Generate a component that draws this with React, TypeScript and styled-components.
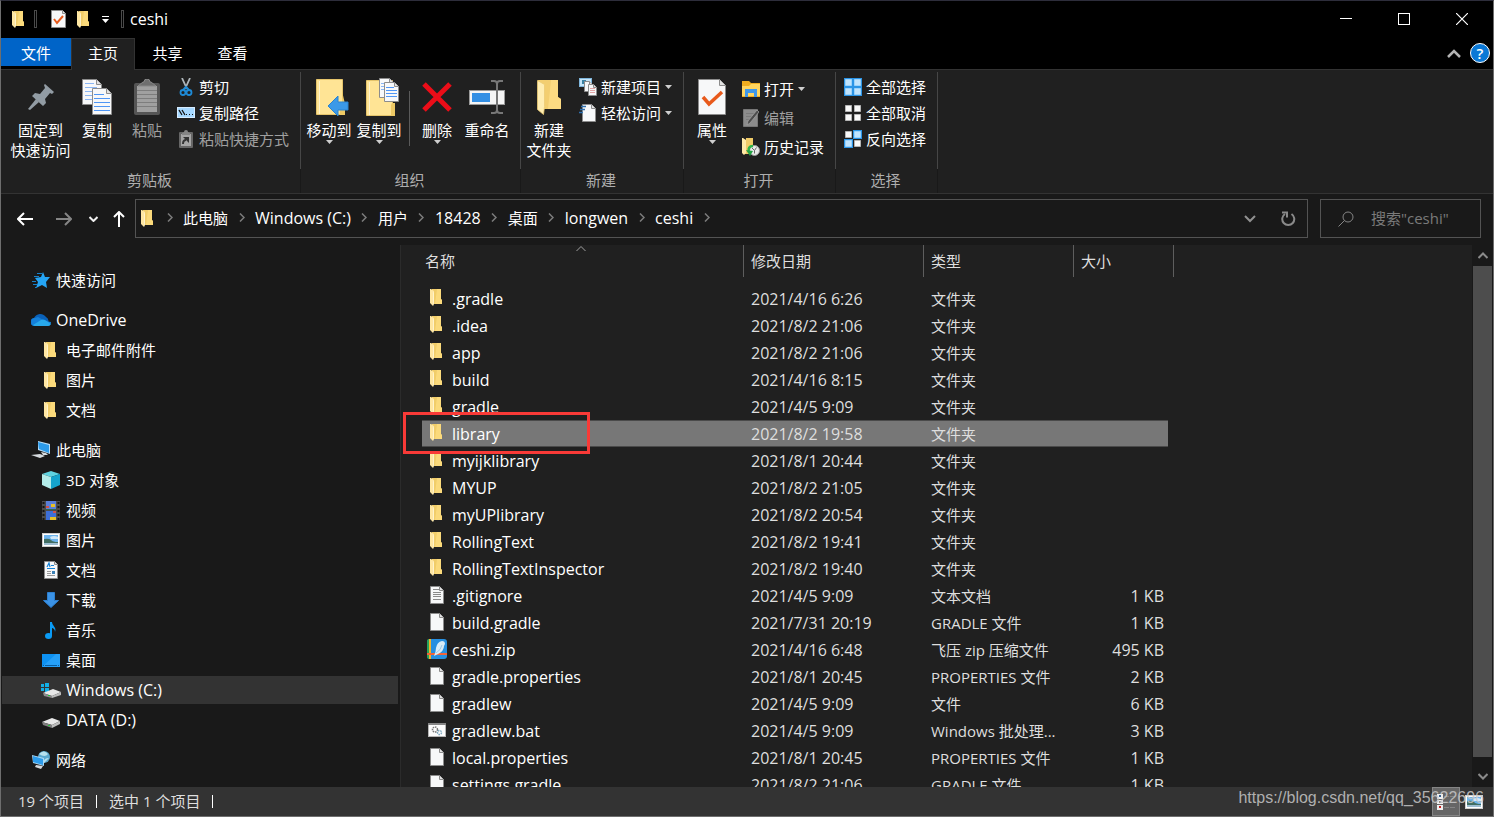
import React from 'react';
import styled, { createGlobalStyle, css } from 'styled-components';

const GlobalStyle = createGlobalStyle`
  *, *::before, *::after { box-sizing: border-box; }
  body {
    margin: 0;
    background: #191919;
    color: #fff;
    font-family: "Open Sans", "Noto Sans CJK SC", sans-serif;
    font-size: 15px;
    line-height: 20px;
    overflow: hidden;
  }
  button, input { font: inherit; color: inherit; }
  button { background: none; border: 0; padding: 0; margin: 0; cursor: default; white-space: nowrap; }
  svg { display: block; flex: none; }
`;

const hasHan = (s: string) => /[\u4e00-\u9fff]/.test(s);

const Txt = styled.span<{ $latin: boolean }>`
  font-size: ${p => (p.$latin ? 16 : 15)}px;
`;

/** Label whose size suits its script: Latin runs slightly larger than Han. */
const T = ({ children }: { children: string }) => <Txt $latin={!hasHan(children)}>{children}</Txt>;

/* ---------- Icons ---------- */

type IconProps = { name: string };

const Page = ({ x = 0, y = 0, w = 14, h = 17, f = 4 }: { x?: number; y?: number; w?: number; h?: number; f?: number }) => (
  <>
    <path d={`M${x + 0.5} ${y + 0.5}h${w - f - 1}l${f} ${f}v${h - f - 1}h${-(w - 1)}z`} fill="#f7f8f9" stroke="#8c8c8c" />
    <path d={`M${x + w - f - 0.5} ${y + 0.5}v${f}h${f}`} fill="#e2e2e2" stroke="#8c8c8c" />
  </>
);

const icons: Record<string, [number, number, React.ReactNode]> = {
  folder: [14, 17, <>
    <path d="M2 0h9v10l1 1v4H2z" fill="#f1cd6a" />
    <path d="M7 0h4v10l1 1v4H5z" fill="#ffdf83" opacity=".7" />
    <path d="M0 0h1l3 2v12l-1 3-3-3z" fill="#ffe7a3" />
    <path d="M4 2v12l-1 3V4z" fill="#fff3cc" />
  </>],
  pin: [26, 26, <g fill="#929ca4">
    <path d="M17 0l9 8-2 2-2-1-5 6 1 4-3 3L4 12l3-3 5 1 5-6-1-3z" />
    <path d="M8 15l3 3-9 8-2-1z" />
  </g>],
  copy: [30, 36, <>
    <Page w={20} h={26} f={5} />
    <path d="M3 4.500h9M3 8.500h12M3 12.500h7M3 16.500h7M3 20.500h7" stroke="#8ab6f4" />
    <Page x={10} y={9} w={20} h={27} f={5} />
    <path d="M12 15.500h10M12 19.500h16M12 23.500h16M12 27.500h16M12 31.500h16" stroke="#4f96f5" />
  </>],
  paste: [26, 36, <>
    <rect y="4" width="26" height="32" rx="2" fill="#555" />
    <rect x="3" y="7" width="20" height="26" fill="#a0a0a0" />
    <path d="M3 11.500h20M3 15.500h20M3 19.500h20M3 23.500h20M3 27.500h20" stroke="#7d7d7d" />
    <path d="M4 7l5-4h1a3 3 0 0 1 6 0h1l5 4z" fill="#6f6f6f" stroke="#888" />
  </>],
  cut: [18, 18, <>
    <path d="M5 0l5 11M13 0L8 11" stroke="#aeb5ba" strokeWidth="1.800" />
    <circle cx="6" cy="14.500" r="2.500" fill="none" stroke="#1e8ad6" strokeWidth="1.800" />
    <circle cx="12" cy="14.500" r="2.500" fill="none" stroke="#1e8ad6" strokeWidth="1.800" />
    <path d="M6 12l3-3 3 3" fill="none" stroke="#1e8ad6" strokeWidth="2" />
  </>],
  path: [18, 11, <>
    <rect x=".5" y=".5" width="17" height="10" fill="#a6d8ff" stroke="#d6ecff" />
    <path d="M2 3l3 5M5 3l3 5" stroke="#111" strokeWidth="1.300" />
    <path d="M9 7.500h1M12 7.500h1M15 7.500h1" stroke="#111" />
  </>],
  shortcut: [14, 18, <>
    <rect y="2" width="14" height="16" rx="1" fill="#666" />
    <rect x="2" y="4" width="10" height="12" fill="#a5a5a5" />
    <path d="M3 3l2-1a2 2 0 0 1 4 0l2 1v2H3z" fill="#858585" />
    <path d="M4 14c0-2 1-4 3-4" fill="none" stroke="#333" strokeWidth="2" />
    <path d="M4 7h6v6z" fill="#333" />
  </>],
  moveTo: [40, 38, <g transform="translate(6 0)">
    <path d="M1.500 1.500h26v23l2 2v10h-28z" fill="#ffe495" stroke="#e5c46b" />
    <path d="M4.500 3v33" stroke="#fff4cf" />
    <path d="M25 37V26h2V13l3 13v11z" fill="#edc965" />
    <path d="M13 28l10-10v6h10v8H23v6z" fill="#3b99e8" stroke="#2b83cf" />
  </g>],
  copyTo: [40, 38, <g transform="translate(7 0)">
    <path d="M.5 2.500h26v22l2 2v11H.5z" fill="#ffe495" stroke="#e5c46b" />
    <path d="M3.500 4v33" stroke="#fff4cf" />
    <path d="M25 38V27l1-2h3v13z" fill="#edc965" />
    <Page x={13} y={0} w={15} h={20} f={4} />
    <path d="M15 5.500h6M15 8.500h3M15 11.500h3" stroke="#8ab6f4" />
    <Page x={18} y={4} w={15} h={20} f={4} />
    <path d="M20 9.500h8M20 12.500h11M20 15.500h11M20 18.500h11" stroke="#4f96f5" />
  </g>],
  del: [30, 30, <path d="M2 2l26 26M28 2L2 28" stroke="#ec0d18" strokeWidth="5" />],
  rename: [36, 34, <>
    <rect x=".5" y="10.500" width="35" height="14" fill="#f5f5f5" stroke="#9a9a9a" />
    <rect x="3" y="13" width="18" height="9" fill="#338fe4" />
    <path d="M22 1h3q3 0 3 3v26q0 3-3 3h-3M34 1h-3q-3 0-3 3M34 33h-3q-3 0-3-3" fill="none" stroke="#777" strokeWidth="2" />
  </>],
  newFolder: [24, 36, <>
    <path d="M1 1h20v17l3 2v10H5z" fill="#f3ce70" />
    <path d="M14 1h7v17l3 2v10H11z" fill="#ffe08a" opacity=".7" />
    <path d="M.5 1.500l7 4v22l-1 8-6-5z" fill="#ffedb2" stroke="#eccb73" strokeWidth=".8" />
  </>],
  newItem: [18, 18, <>
    <rect x=".5" y=".5" width="12" height="8" fill="#c5e6fa" stroke="#7fb6dc" />
    <rect x="3" y="2" width="4" height="4" fill="#3a83a5" />
    <Page x={5} y={3} w={9} h={11} f={3} />
    <Page x={9} y={6} w={9} h={12} f={3} />
    <path d="M11 10.500h5M11 12.500h5M11 14.500h5" stroke="#e3a5a5" />
  </>],
  easy: [18, 19, <>
    <Page x={3} y={1} w={14} h={18} f={4} />
    <path d="M2 3.500h5M1 6.500h5M0 9.500h4" stroke="#2f6fae" strokeWidth="1.300" />
  </>],
  props: [28, 36, <>
    <Page w={28} h={36} f={6} />
    <path d="M5 18l6 7 13-12" fill="none" stroke="#e85a1c" strokeWidth="3.500" />
  </>],
  propsSmall: [15, 18, <>
    <Page w={15} h={18} f={3} />
    <path d="M3 9l3 4 6-7" fill="none" stroke="#e85a1c" strokeWidth="2" />
  </>],
  open: [18, 16, <>
    <path d="M0 0h7l2 2h9v14H0z" fill="#f0ad20" />
    <path d="M0 5h7l2-2h9v12H0z" fill="#ffd55f" />
    <path d="M3 16V8h12v8h-3v-4H6v4z" fill="#3f97e8" />
  </>],
  edit: [16, 18, <>
    <path d="M.5 .5h14v17H.5z" fill="#8c8c8c" stroke="#777" />
    <path d="M3 4.500h8M3 7.500h6M3 10.500h4" stroke="#7a7a7a" />
    <path d="M4 16l1-4L14 1l2 2L7 14z" fill="#4d4d4d" stroke="#a5a5a5" strokeWidth=".7" />
  </>],
  history: [18, 18, <>
    <path d="M4 0h7v16H3z" fill="#f1cc68" />
    <path d="M0 0h1l3 2v13l-2 2-2-2z" fill="#ffe9a6" />
    <circle cx="12.500" cy="12.500" r="5" fill="#e9e9e9" stroke="#9a9a9a" />
    <path d="M10 10l2.500 2.500 2-3M12.500 12.500v3" fill="none" stroke="#666" />
    <path d="M11 8c-4 0-5 3-4 5" fill="none" stroke="#2fb54a" strokeWidth="2.500" />
    <path d="M4 12l7 1-3 5z" fill="#25a244" />
  </>],
  selAll: [18, 18, <>
    <rect width="18" height="18" fill="#2b94e6" />
    <path d="M1.500 1.500h6v6h-6zM10.500 1.500h6v6h-6zM1.500 10.500h6v6h-6zM10.500 10.500h6v6h-6z" fill="#c0e3fd" stroke="#9bd2fa" />
  </>],
  selNone: [18, 18, <path d="M1.500 1.500h6v6h-6zM10.500 1.500h6v6h-6zM1.500 10.500h6v6h-6zM10.500 10.500h6v6h-6z" fill="#fafafa" stroke="#b5b5b5" />],
  selInv: [18, 18, <>
    <path d="M9 0h9v9H9zM0 9h9v9H0z" fill="#2b94e6" />
    <path d="M1.500 1.500h6v6h-6zM10.500 10.500h6v6h-6z" fill="#fafafa" stroke="#b5b5b5" />
    <path d="M10.500 1.500h6v6h-6zM1.500 10.500h6v6h-6z" fill="#c0e3fd" stroke="#9bd2fa" />
  </>],
  star: [18, 16, <>
    <path d="M11 0l2 5h5l-4 5 1 6-5-3-6 3 2-6-3-4 6-1z" fill="#25a5f5" />
    <path d="M5 1.500h5M2 4.500h5M0 9.500h4M1 12.500h4M3 15.500h2" stroke="#1680c8" />
  </>],
  onedrive: [20, 14, <>
    <path d="M4 13a4 4 0 0 1-1-8 7 7 0 0 1 12-1 5 5 0 0 1 1 8z" fill="#0a62ba" />
    <path d="M4 13a4 4 0 0 1 0-8l3-1 7 4 6 1a4 4 0 0 1-4 4z" fill="#1480da" />
    <path d="M2 12l8-5q2-1 4 0l6 4q-1 2-3 2H4q-1 0-2-1z" fill="#28a8ea" />
  </>],
  pc: [20, 18, <>
    <path d="M7 0l12 3v10L7 9z" fill="#b9dcf5" />
    <path d="M7 1l11 3v8L8 8z" fill="#2c9bea" />
    <path d="M10 11l5 1 2 2-5 0zM0 14l9-1 5 2-5 2z" fill="#d5dade" />
  </>],
  cube: [18, 18, <>
    <path d="M0 3l9-3 9 3-9 3z" fill="#5fd3e0" />
    <path d="M0 3l9 3v12l-9-4z" fill="#b3ece9" />
    <path d="M18 3L9 6v12l9-4z" fill="#15a4cc" />
  </>],
  video: [18, 19, <>
    <rect width="18" height="19" fill="#4b4b4b" />
    <path d="M1.500 1v18M16.500 1v18" stroke="#141414" strokeWidth="2" strokeDasharray="2 2" />
    <rect x="4" width="10" height="9" fill="#5a7fd8" />
    <rect x="4" y="10" width="10" height="9" fill="#3d6fd8" />
    <path d="M9 3h4v3H9zM8 16h6v3H8z" fill="#e7c026" />
    <path d="M4 5h3v2H4zM11 10h3v2h-3z" fill="#d0524a" />
    <path d="M4 8h10v1H4z" fill="#2f6a4a" />
  </>],
  picture: [18, 14, <>
    <rect x=".5" y=".5" width="17" height="13" fill="#fff" stroke="#cdcdcd" />
    <rect x="2" y="2" width="14" height="10" fill="#6db4ee" />
    <path d="M2 6q5-1 7 1t7 2v2H2z" fill="#416e63" />
    <path d="M8 4q4-2 8 0v2H9z" fill="#d2eafb" />
    <path d="M2 10h14v2H2z" fill="#9dbdd1" />
  </>],
  doc: [15, 18, <>
    <Page w={14} h={18} f={3} />
    <path d="M3 6l2-4 1 4M7 4.500h3M3 7.500h8" stroke="#1683d8" strokeWidth="1.200" fill="none" />
    <path d="M3 10.500h4M3 12.500h4M3 14.500h8" stroke="#999" />
    <path d="M8 10h3v3H8z" fill="#3b82b8" />
  </>],
  download: [16, 16, <path d="M4.500 .5h7v8h4l-7.500 7-7.500-7h4z" fill="#3b93e6" stroke="#2c7fd0" />],
  music: [12, 17, <>
    <ellipse cx="3.500" cy="14" rx="3.500" ry="3" fill="#0a9bf5" />
    <path d="M5 0h2c0 4 5 5 3 10 0-3-2-4-3-4v8H5z" fill="#0a9bf5" />
  </>],
  desktop: [18, 13, <>
    <rect width="18" height="13" fill="#0d91f2" />
    <path d="M0 13L14 0h4v13z" fill="#36a9fb" opacity=".6" />
    <path d="M1 11.500h1M3 11.500h12M16 11.500h1" stroke="#055aa0" />
  </>],
  driveC: [20, 15, <>
    <path d="M0 1h3v3H0zM4 0h4v4H4zM0 5h3v3H0zM4 5h4v4H4z" fill="#12aee5" />
    <path d="M2 10l10-4 8 3-9 4z" fill="#e8e8e8" />
    <path d="M2 10l9 3v2l-8-2z" fill="#8e8e8e" />
    <path d="M11 13l9-4v3l-9 3z" fill="#bdbdbd" />
    <path d="M7 12.500h2" stroke="#21c434" />
  </>],
  drive: [18, 16, <>
    <path d="M0 10l10-4 8 3-8 4z" fill="#e8e8e8" />
    <path d="M0 10l10 3v3l-9-3z" fill="#7e7e7e" />
    <path d="M10 13l8-4v3l-8 4z" fill="#bdbdbd" />
    <path d="M6 13.500h2" stroke="#21c434" />
  </>],
  network: [19, 18, <>
    <circle cx="12" cy="6" r="6" fill="#5ba9cf" />
    <path d="M7 3q5-5 9 0-3 4-9 0M12 12q-1-5 5-5" fill="#b7e1ee" />
    <path d="M0 4l12 3v8L1 12z" fill="#a9d8f5" />
    <path d="M1 5l10 3v6L1 11z" fill="#2c9bea" />
    <path d="M4 14l7 1-2 3-6-2z" fill="#d5dade" />
  </>],
  file: [14, 18, <Page w={14} h={18} f={4} />],
  text: [14, 18, <>
    <Page w={14} h={18} f={4} />
    <path d="M3 3.500h6M3 6.500h8M3 8.500h8M3 10.500h8M3 13.500h8" stroke="#8a8a8a" />
  </>],
  zip: [20, 20, <>
    <rect width="20" height="20" rx="3" fill="#278fe0" />
    <path d="M0 3q0-3 2-3v20q-2 0-2-3z" fill="#27a35a" />
    <path d="M2 0h2v20H2z" fill="#f5b32b" />
    <path d="M0 14h20v2H0z" fill="#f0643a" />
    <path d="M7 17q2-5 2-8 1-6 6-7 3 0 3 3l-1 2q0 5-6 8z" fill="#d8ecf8" />
    <path d="M9 14q5-3 6-8" stroke="#9cc9e6" fill="none" />
  </>],
  bat: [18, 14, <>
    <rect x=".5" y=".5" width="17" height="13" fill="#fbfbfb" stroke="#b5b5b5" />
    <path d="M0 0h18v2H0z" fill="#858585" />
    <circle cx="7" cy="6.500" r="2.500" fill="none" stroke="#777" strokeWidth="1.500" strokeDasharray="1.500 .8" />
    <circle cx="11.500" cy="9.500" r="2" fill="none" stroke="#7fa9c0" strokeWidth="1.500" strokeDasharray="1.500 .8" />
  </>],
  details: [18, 16, <>
    <path d="M0 0h6v5H0zM0 6h6v4H0zM0 11h6v5H0z" fill="#eee" />
    <path d="M2 1h2v2H2z" fill="#38628f" />
    <path d="M2 7h2v2H2z" fill="#9b8c7a" />
    <path d="M2 12h2v2H2z" fill="#c91f1f" />
    <path d="M7 2.500h5M13 2.500h5M7 8.500h5M13 8.500h5M7 13.500h5M13 13.500h5" stroke="#858585" />
  </>],
  caret: [7, 4, <path d="M0 0h7L3.500 4z" fill="#cfcfcf" />],
  qat: [7, 7, <><path d="M0 .5h7" stroke="#fff" /><path d="M0 3h7L3.500 7z" fill="#fff" /></>],
  back: [16, 14, <path d="M16 7H1M7 1L1 7l6 6" fill="none" stroke="#fff" strokeWidth="2" />],
  forward: [16, 14, <path d="M0 7h15M9 1l6 6-6 6" fill="none" stroke="#858585" strokeWidth="2" />],
  recent: [9, 6, <path d="M.5 1l4 4 4-4" fill="none" stroke="#f0f0f0" strokeWidth="2" />],
  up: [12, 16, <path d="M6 16V1M1 6l5-5 5 5" fill="none" stroke="#fff" strokeWidth="2" />],
  chevR: [6, 9, <path d="M1 .5l4 4-4 4" fill="none" stroke="#7d7d7d" strokeWidth="1.500" />],
  chevD: [12, 8, <path d="M1 1l5 5 5-5" fill="none" stroke="#909090" strokeWidth="2" />],
  chevU: [14, 9, <path d="M1 8l6-6 6 6" fill="none" stroke="#b4b4b4" strokeWidth="2.500" />],
  sort: [10, 5, <path d="M.5 5L5 .5 9.500 5" fill="none" stroke="#a0a0a0" />],
  scrollUp: [10, 7, <path d="M.5 6L5 1.500 9.500 6" fill="none" stroke="#8a8a8a" strokeWidth="2" />],
  scrollDown: [10, 7, <path d="M.5 1L5 5.500 9.500 1" fill="none" stroke="#8a8a8a" strokeWidth="2" />],
  refresh: [15, 16, <>
    <path d="M10.500 3A6 6 0 1 1 4 3" fill="none" stroke="#8a8a8a" strokeWidth="2" />
    <path d="M1 1.500h5v5" fill="none" stroke="#8a8a8a" strokeWidth="2" />
  </>],
  search: [16, 16, <>
    <circle cx="10" cy="6" r="5" fill="none" stroke="#858585" />
    <path d="M6.500 9.500l-6 6" stroke="#858585" />
  </>],
  min: [12, 12, <path d="M0 5.500h12" stroke="#fff" />],
  max: [12, 12, <rect x=".5" y=".5" width="11" height="11" fill="none" stroke="#fff" />],
  close: [12, 12, <path d="M0 0l12 12M12 0L0 12" stroke="#fff" strokeWidth="1.200" />],
};

const Icon = ({ name }: IconProps) => {
  const [w, h, body] = icons[name];
  return <svg width={w} height={h} viewBox={`0 0 ${w} ${h}`} aria-hidden="true">{body}</svg>;
};

/* ---------- Window frame ---------- */

const Window = styled.main`
  height: 100vh;
  min-height: 480px;
  display: flex;
  flex-direction: column;
  border: 1px solid #6e6e6e;
  border-top-color: #2d2d3b;
`;

const TitleBar = styled.header`
  height: 37px;
  flex: none;
  display: flex;
  align-items: center;
  background: #000;
  padding: 0 0 1px 11px;
`;

const TitleRule = styled.span`
  width: 3px;
  height: 18px;
  border: 1px solid #4a4a4a;
`;

const QuickTools = styled.div`
  display: flex;
  align-items: center;
  gap: 11px;
  margin: 0 12px 0 14px;
`;

const TitleMain = styled.div`
  display: flex;
  align-items: center;
  gap: 8px;
`;

const Caption = styled.h1`
  flex: 1;
  margin: 0 0 0 6px;
  font-weight: 400;
  line-height: 20px;
  display: flex;
`;

const CaptionButton = styled.button`
  width: 58px;
  height: 36px;
  display: grid;
  place-items: center;
`;

const CaptionButtons = styled.div`
  display: flex;
  padding-right: 2px;
`;

const TabBar = styled.nav`
  display: flex;
  flex: none;
  height: 31px;
  background: #000;
`;

const Tab = styled.button<{ $kind?: 'file' | 'active' }>`
  width: 65px;
  height: 31px;
  border: 1px solid transparent;
  border-bottom: 0;
  padding-bottom: 2px;
  ${p => p.$kind === 'file' && css`
    width: 70px;
    height: 28px;
    padding-bottom: 0;
    background: #0064c8;
  `}
  ${p => p.$kind === 'active' && css`
    width: 64px;
    height: 32px;
    padding-bottom: 3px;
    background: #202020;
    border-color: #333;
    position: relative;
  `}
`;

const TabTools = styled.div`
  margin-left: auto;
  display: flex;
  align-items: center;
  gap: 9px;
  padding: 0 3px 1px 0;
`;

const Help = styled.button`
  width: 20px;
  height: 20px;
  border-radius: 50%;
  border: 1px solid #fff;
  background: #0a78d6;
  line-height: 18px;
  font-weight: 600;
`;

/* ---------- Ribbon ---------- */

const Ribbon = styled.section`
  flex: none;
  display: flex;
  height: 125px;
  background: #202020;
  border-top: 1px solid #333;
  border-bottom: 1px solid #333;
`;

const Group = styled.div<{ $w: number }>`
  width: ${p => p.$w}px;
  display: flex;
  flex-direction: column;
  flex: none;
`;

const GroupBody = styled.div`
  display: flex;
  height: 97px;
  margin-top: 2px;
  border-right: 1px solid #464646;
`;

const GroupName = styled.div`
  flex: 1;
  padding: 1px 2px 0 0;
  text-align: center;
  color: #aeaeae;
  border-right: 1px solid #191919;
`;

const BigButton = styled.button<{ $wide?: boolean; $off?: boolean }>`
  width: ${p => (p.$wide ? 63 : 50)}px;
  padding-top: 6px;
  display: flex;
  flex-direction: column;
  align-items: center;
  color: ${p => (p.$off ? '#a0a0a0' : '#fff')};
  white-space: pre-line;
  line-height: 20px;
`;

const BigIcon = styled.span`
  height: 38px;
  margin-bottom: 4px;
  display: grid;
  place-items: center;
`;

const Big = (p: { icon: string; label: string; wide?: boolean; off?: boolean; drop?: boolean }) => (
  <BigButton $wide={p.wide} $off={p.off} disabled={p.off}>
    <BigIcon><Icon name={p.icon} /></BigIcon>
    {p.label}
    {p.drop && <Icon name="caret" />}
  </BigButton>
);

const SmallList = styled.div<{ $roomy?: boolean }>`
  display: flex;
  flex-direction: column;
  align-items: flex-start;
  padding: ${p => (p.$roomy ? '3px 0 0 5px' : '2px 0 0 5px')};
  & > button { height: ${p => (p.$roomy ? 29 : 26)}px; }
`;

const SmallButton = styled.button<{ $off?: boolean }>`
  display: flex;
  align-items: center;
  gap: 4px;
  padding-bottom: 1px;
  color: ${p => (p.$off ? '#a0a0a0' : '#fff')};
`;

const SmallIcon = styled.span`
  width: 18px;
  display: grid;
  place-items: center;
`;

const Small = (p: { icon: string; label: string; off?: boolean; drop?: boolean }) => (
  <SmallButton $off={p.off} disabled={p.off}>
    <SmallIcon><Icon name={p.icon} /></SmallIcon>
    {p.label}
    {p.drop && <Icon name="caret" />}
  </SmallButton>
);

const Lead = styled.span<{ $w: number }>`
  width: ${p => p.$w}px;
  flex: none;
`;

const Divider = styled.span`
  width: 1px;
  height: 55px;
  margin: 19px 2px 0 5px;
  background: #5a5a5a;
`;

/* ---------- Address bar ---------- */

const AddressRow = styled.div`
  flex: none;
  height: 51px;
  padding: 5px 12px 7px 16px;
  display: flex;
  background: #191919;
`;

const NavButtons = styled.div`
  display: flex;
  align-items: center;
  width: 118px;
  gap: 23px;
  & > button:nth-child(3) { margin: 0 -8px 0 -6px; }
`;

const AddressBox = styled.div`
  flex: 1;
  min-width: 0;
  display: flex;
  align-items: center;
  border: 1px solid #535353;
  padding-left: 5px;
`;

const Crumbs = styled.ol`
  flex: 1;
  display: flex;
  align-items: center;
  list-style: none;
  margin: 0;
  padding: 0 0 2px 1px;
  min-width: 0;
`;

const Crumb = styled.li`
  display: flex;
  align-items: center;
`;

const CrumbSep = styled.span`
  width: 27px;
  display: grid;
  place-items: center;
`;

const BoxButton = styled.button`
  width: 38px;
  height: 36px;
  display: grid;
  place-items: center;
`;

const SearchBox = styled.label`
  width: 161px;
  margin-left: 12px;
  border: 1px solid #535353;
  display: flex;
  align-items: center;
  padding-left: 17px;
  gap: 17px;
`;

const SearchInput = styled.input`
  flex: 1;
  min-width: 0;
  border: 0;
  padding: 0 0 2px;
  outline: 0;
  background: none;
  &::placeholder { color: #7a7a7a; opacity: 1; }
`;

/* ---------- Navigation pane ---------- */

const Body = styled.div`
  flex: 1;
  min-height: 0;
  display: flex;
  background: #202020;
`;

const Side = styled.aside`
  width: 400px;
  flex: none;
  background: #191919;
  border-right: 1px solid #2b2b2b;
  padding: 20px 2px 0 1px;
  overflow: hidden;
`;

const TreeGroup = styled.ul`
  list-style: none;
  margin: 0 0 10px;
  padding: 0;
`;

const TreeButton = styled.button<{ $root?: boolean; $on?: boolean }>`
  width: 100%;
  height: ${p => (p.$on ? 28 : 30)}px;
  margin: ${p => (p.$on ? 1 : 0)}px 0;
  display: flex;
  align-items: center;
  gap: 5px;
  padding-left: ${p => (p.$root ? 29 : 39)}px;
  background: ${p => (p.$on ? '#333' : 'none')};
`;

const TreeIcon = styled.span`
  width: 20px;
  display: grid;
  place-items: center;
`;

const tree: [string, string][][] = [
  [['star', '快速访问']],
  [['onedrive', 'OneDrive'], ['folder', '电子邮件附件'], ['folder', '图片'], ['folder', '文档']],
  [['pc', '此电脑'], ['cube', '3D 对象'], ['video', '视频'], ['picture', '图片'], ['doc', '文档'], ['download', '下载'],
    ['music', '音乐'], ['desktop', '桌面'], ['driveC', 'Windows (C:)'], ['drive', 'DATA (D:)']],
  [['network', '网络']],
];

/* ---------- File list ---------- */

const ListPane = styled.section`
  flex: 1;
  min-width: 0;
  overflow: hidden;
  padding-left: 21px;
`;

const FileTable = styled.table`
  table-layout: fixed;
  width: 752px;
  border-collapse: separate;
  border-spacing: 0;
  color: #dedede;
`;

const Head = styled.th`
  height: 32px;
  padding: 0 0 0 7px;
  text-align: left;
  font-weight: 400;
  border-right: 1px solid #5e5e5e;
  position: relative;
  &:first-child { padding-left: 3px; }
`;

const SortMark = styled.span`
  position: absolute;
  top: 1px;
  left: calc(50% - 7px);
`;

const Gap = styled.td`
  height: 8px;
  padding: 0;
`;

const Row = styled.tr<{ $on?: boolean }>`
  ${p => p.$on && css`
    & > td:not(:last-child) {
      background: #777;
      border-top: 1px solid #4a4a4a;
      border-bottom: 1px solid #4a4a4a;
    }
  `}
`;

const Cell = styled.td<{ $right?: boolean }>`
  height: 27px;
  padding: ${p => (p.$right ? '0 4px 0 0' : '0 0 0 7px')};
  text-align: ${p => (p.$right ? 'right' : 'left')};
  white-space: nowrap;
  position: relative;
  &:first-child { padding: 0 0 0 5px; color: #fff; }
  &:last-child { padding: 0; }
`;

const NameCell = styled.div`
  display: flex;
  align-items: center;
  gap: 5px;
`;

const FileIcon = styled.span`
  width: 20px;
  height: 22px;
  padding-bottom: 2px;
  display: grid;
  place-items: center;
`;

const Callout = styled.span`
  position: absolute;
  left: -19px;
  top: -9px;
  width: 187px;
  height: 42px;
  border: 3px solid #f93a37;
  z-index: 1;
  pointer-events: none;
`;

const ScrollBar = styled.div`
  width: 21px;
  flex: none;
  display: flex;
  flex-direction: column;
  background: #191919;
  & > button { height: 21px; display: grid; place-items: center; }
`;

const Thumb = styled.div`
  flex: 1;
  margin: 0 1px 9px 1px;
  background: #4d4d4d;
`;

const files: [string, string, string, string, string][] = [
  ['folder', '.gradle', '2021/4/16 6:26', '文件夹', ''],
  ['folder', '.idea', '2021/8/2 21:06', '文件夹', ''],
  ['folder', 'app', '2021/8/2 21:06', '文件夹', ''],
  ['folder', 'build', '2021/4/16 8:15', '文件夹', ''],
  ['folder', 'gradle', '2021/4/5 9:09', '文件夹', ''],
  ['folder', 'library', '2021/8/2 19:58', '文件夹', ''],
  ['folder', 'myijklibrary', '2021/8/1 20:44', '文件夹', ''],
  ['folder', 'MYUP', '2021/8/2 21:05', '文件夹', ''],
  ['folder', 'myUPlibrary', '2021/8/2 20:54', '文件夹', ''],
  ['folder', 'RollingText', '2021/8/2 19:41', '文件夹', ''],
  ['folder', 'RollingTextInspector', '2021/8/2 19:40', '文件夹', ''],
  ['text', '.gitignore', '2021/4/5 9:09', '文本文档', '1 KB'],
  ['file', 'build.gradle', '2021/7/31 20:19', 'GRADLE 文件', '1 KB'],
  ['zip', 'ceshi.zip', '2021/4/16 6:48', '飞压 zip 压缩文件', '495 KB'],
  ['file', 'gradle.properties', '2021/8/1 20:45', 'PROPERTIES 文件', '2 KB'],
  ['file', 'gradlew', '2021/4/5 9:09', '文件', '6 KB'],
  ['bat', 'gradlew.bat', '2021/4/5 9:09', 'Windows 批处理...', '3 KB'],
  ['file', 'local.properties', '2021/8/1 20:45', 'PROPERTIES 文件', '1 KB'],
  ['file', 'settings.gradle', '2021/8/2 21:06', 'GRADLE 文件', '1 KB'],
];

/* ---------- Status bar ---------- */

const Status = styled.footer`
  flex: none;
  height: 29px;
  display: flex;
  align-items: center;
  background: #333;
  color: #dedede;
  padding: 0 5px 0 17px;
  position: relative;
`;

const StatusText = styled.span`
  padding-bottom: 2px;
`;

const StatusRule = styled.span`
  width: 1px;
  height: 13px;
  margin: 0 12px;
  background: #fff;
`;

const ViewButton = styled.button<{ $on?: boolean }>`
  width: 28px;
  height: 29px;
  display: grid;
  place-items: center;
  background: ${p => (p.$on ? '#666' : 'none')};
  border: 1px solid ${p => (p.$on ? '#858585' : 'transparent')};
`;

const Views = styled.div`
  margin-left: auto;
  display: flex;
`;

const Watermark = styled.span`
  position: absolute;
  right: 9px;
  top: 1px;
  font: 16px/20px "Liberation Sans", Arial, sans-serif;
  color: rgba(200, 200, 200, 0.85);
`;

const crumbs = ['此电脑', 'Windows (C:)', '用户', '18428', '桌面', 'longwen', 'ceshi'];

export default function App() {
  return (
    <>
      <GlobalStyle />
      <Window>
        <TitleBar>
          <TitleMain><Icon name="folder" /><TitleRule /></TitleMain>
          <QuickTools>
            <button aria-label="属性"><Icon name="propsSmall" /></button>
            <button aria-label="新建文件夹"><Icon name="folder" /></button>
            <button aria-label="自定义"><Icon name="qat" /></button>
          </QuickTools>
          <TitleRule />
          <Caption><T>ceshi</T></Caption>
          <CaptionButtons>
            <CaptionButton aria-label="最小化"><Icon name="min" /></CaptionButton>
            <CaptionButton aria-label="最大化"><Icon name="max" /></CaptionButton>
            <CaptionButton aria-label="关闭"><Icon name="close" /></CaptionButton>
          </CaptionButtons>
        </TitleBar>

        <TabBar>
          <Tab $kind="file">文件</Tab>
          <Tab $kind="active">主页</Tab>
          <Tab>共享</Tab>
          <Tab>查看</Tab>
          <TabTools>
            <button aria-label="折叠功能区"><Icon name="chevU" /></button>
            <Help>?</Help>
          </TabTools>
        </TabBar>

        <Ribbon>
          <Group $w={300}>
            <GroupBody>
              <Lead $w={8} />
              <Big icon="pin" label={'固定到\n快速访问'} wide />
              <Big icon="copy" label="复制" />
              <Big icon="paste" label="粘贴" off />
              <SmallList>
                <Small icon="cut" label="剪切" />
                <Small icon="path" label="复制路径" />
                <Small icon="shortcut" label="粘贴快捷方式" off />
              </SmallList>
            </GroupBody>
            <GroupName>剪贴板</GroupName>
          </Group>
          <Group $w={220}>
            <GroupBody>
              <Lead $w={3} />
              <Big icon="moveTo" label="移动到" drop />
              <Big icon="copyTo" label="复制到" drop />
              <Divider />
              <Big icon="del" label="删除" drop />
              <Big icon="rename" label="重命名" />
            </GroupBody>
            <GroupName>组织</GroupName>
          </Group>
          <Group $w={163}>
            <GroupBody>
              <Lead $w={3} />
              <Big icon="newFolder" label={'新建\n文件夹'} />
              <SmallList>
                <Small icon="newItem" label="新建项目" drop />
                <Small icon="easy" label="轻松访问" drop />
              </SmallList>
            </GroupBody>
            <GroupName>新建</GroupName>
          </Group>
          <Group $w={152}>
            <GroupBody>
              <Lead $w={3} />
              <Big icon="props" label="属性" drop />
              <SmallList $roomy>
                <Small icon="open" label="打开" drop />
                <Small icon="edit" label="编辑" off />
                <Small icon="history" label="历史记录" />
              </SmallList>
            </GroupBody>
            <GroupName>打开</GroupName>
          </Group>
          <Group $w={102}>
            <GroupBody>
              <Lead $w={3} />
              <SmallList>
                <Small icon="selAll" label="全部选择" />
                <Small icon="selNone" label="全部取消" />
                <Small icon="selInv" label="反向选择" />
              </SmallList>
            </GroupBody>
            <GroupName>选择</GroupName>
          </Group>
        </Ribbon>

        <AddressRow>
          <NavButtons>
            <button aria-label="后退"><Icon name="back" /></button>
            <button aria-label="前进"><Icon name="forward" /></button>
            <button aria-label="最近位置"><Icon name="recent" /></button>
            <button aria-label="上移"><Icon name="up" /></button>
          </NavButtons>
          <AddressBox>
            <Icon name="folder" />
            <Crumbs>
              <Crumb><CrumbSep><Icon name="chevR" /></CrumbSep></Crumb>
              {crumbs.map(c => (
                <Crumb key={c}>
                  <button><T>{c}</T></button>
                  <CrumbSep><Icon name="chevR" /></CrumbSep>
                </Crumb>
              ))}
            </Crumbs>
            <BoxButton aria-label="以前的位置"><Icon name="chevD" /></BoxButton>
            <BoxButton aria-label="刷新"><Icon name="refresh" /></BoxButton>
          </AddressBox>
          <SearchBox>
            <Icon name="search" />
            <SearchInput type="text" aria-label="搜索" placeholder={'搜索"ceshi"'} />
          </SearchBox>
        </AddressRow>

        <Body>
          <Side>
            {tree.map((group, g) => (
              <TreeGroup key={g}>
                {group.map(([icon, label], i) => (
                  <li key={label}>
                    <TreeButton $root={i === 0} $on={icon === 'driveC'}>
                      <TreeIcon><Icon name={icon} /></TreeIcon>
                      <T>{label}</T>
                    </TreeButton>
                  </li>
                ))}
              </TreeGroup>
            ))}
          </Side>
          <ListPane>
            <FileTable>
              <colgroup>
                <col width="322" /><col width="180" /><col width="150" /><col width="94" /><col width="6" />
              </colgroup>
              <thead>
                <tr>
                  <Head>名称<SortMark><Icon name="sort" /></SortMark></Head>
                  <Head>修改日期</Head>
                  <Head>类型</Head>
                  <Head colSpan={2}>大小</Head>
                </tr>
              </thead>
              <tbody>
                <tr><Gap colSpan={5} /></tr>
                {files.map(([icon, name, date, type, size]) => (
                  <Row key={name} $on={name === 'library'}>
                    <Cell>
                      <NameCell><FileIcon><Icon name={icon} /></FileIcon><T>{name}</T></NameCell>
                      {name === 'library' && <Callout />}
                    </Cell>
                    <Cell><T>{date}</T></Cell>
                    <Cell><T>{type}</T></Cell>
                    <Cell $right><T>{size}</T></Cell>
                    <Cell />
                  </Row>
                ))}
              </tbody>
            </FileTable>
          </ListPane>
          <ScrollBar>
            <button aria-label="向上滚动"><Icon name="scrollUp" /></button>
            <Thumb />
            <button aria-label="向下滚动"><Icon name="scrollDown" /></button>
          </ScrollBar>
        </Body>

        <Status>
          <StatusText>19 个项目</StatusText>
          <StatusRule />
          <StatusText>选中 1 个项目</StatusText>
          <StatusRule />
          <Views>
            <ViewButton $on aria-label="详细信息"><Icon name="details" /></ViewButton>
            <ViewButton aria-label="大图标"><Icon name="picture" /></ViewButton>
          </Views>
          <Watermark>https://blog.csdn.net/qq_35622696</Watermark>
        </Status>
      </Window>
    </>
  );
}
